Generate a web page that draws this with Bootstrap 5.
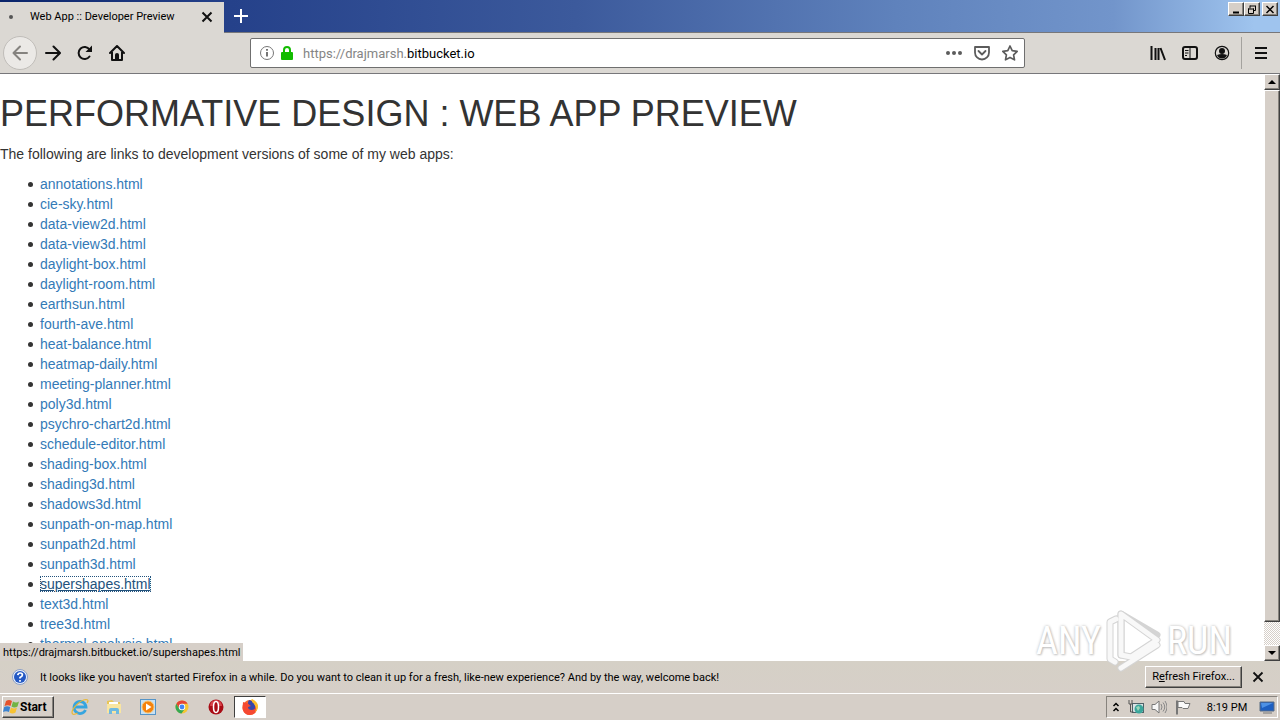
<!DOCTYPE html>
<html lang="en">
<head>
<meta charset="utf-8">
<meta name="viewport" content="width=device-width, initial-scale=1">
<title>Web App :: Developer Preview</title>
<link rel="stylesheet" href="https://cdn.jsdelivr.net/npm/bootstrap@5.3.0/dist/css/bootstrap.min.css">
<style>
:root { --face: #d6cfc8; --tool: #dbd8d3; }
body { font: 11px/16px Roboto, "Open Sans", sans-serif; color: #000; background: #fff; }
button { padding: 0; border: 0; background: none; color: #000; line-height: 14px; }
svg { display: block; flex: none; }
.tabstrip { height: 33px; background: linear-gradient(90deg, #0a246a 0, #25418a 18%, #3c5a9c 45%, #5f82bc 70%, #7295cb 87%, #9fc4ee 98%); border-bottom: 1px solid #77777a; }
.page-tab { width: 224px; height: 31px; margin-top: 2px; padding: 0 11px 2px 9px; background: var(--tool); }
.page-tab-fill { height: 33px; }
.busy { width: 4px; height: 4px; background: #555; border-radius: 50%; margin-right: 17px; }
.new-tab { width: 34px; }
.raised { background: var(--face); border: 1px solid; border-color: #fff #404040 #404040 #fff; box-shadow: inset -1px -1px #87837d; }
.win-btns { padding: 2px 2px 0; }
.win-btn { width: 16px; height: 14px; display: flex; align-items: center; justify-content: center; }
.win-close { margin-left: 2px; }
.toolbar { height: 41px; background: var(--tool); border-bottom: 1px solid #77777a; }
.tool-btn { width: 32px; height: 32px; display: flex; align-items: center; justify-content: center; }
.back { width: 34px; height: 34px; border: 1px solid #c0bdb9; border-radius: 50%; background: #ebe9e6; margin-left: 3px; }
.tool-end { padding-right: 3px; }
.tool-end .vr { margin: 0 3px; }
.urlbar { height: 30px; border: 1px solid #6f6f6f; border-radius: 2px; background: #fff; margin-left: 117px; flex: 0 1 775px; padding: 0 6px 0 8px; }
.address { font: 13px/20px Roboto, "Open Sans", sans-serif; color: #858585; outline: 0; padding-top: 1px; }
.address b { color: #000; font-weight: 400; }
.doc { font: 14px/20px "Liberation Sans", Arial, sans-serif; color: #333; overflow: hidden; padding-top: 20px; }
.doc h1 { font-size: 36px; line-height: 40px; font-weight: 400; margin: 0 0 10px; color: #333; }
.doc p { margin: 0 0 10px; }
.doc ul { padding-left: 28px; margin: 0; list-style: none; }
.doc li { display: flex; align-items: center; gap: 7px; height: 20px; }
.doc li::before { content: ""; width: 5px; height: 5px; border-radius: 50%; background: #333; }
.doc a { color: #337ab7; text-decoration: none; }
.doc a.current { color: #23527c; text-decoration: underline; line-height: 16px; outline: 1px dotted #23527c; outline-offset: -1px; }
.scroller { width: 16px; background: repeating-conic-gradient(#fff 0 25%, #d6cfc8 0 50%) 0 0 / 2px 2px; }
.scroller button { height: 16px; display: flex; align-items: center; justify-content: center; }
.thumb { flex: 0 1 532px; }
.status { left: 0; bottom: 0; height: 18px; padding: 2px 3px 0; background: var(--face); }
.watermark { right: 48px; bottom: -12px; height: 64px; font: 38px/64px "Roboto Condensed", "Liberation Sans Narrow", "Liberation Sans", sans-serif; color: #fff; text-shadow: 0 0 3px #b8b8b8, 1px 1px 2px #ccc; pointer-events: none; z-index: 2; }
.notice { height: 32px; background: linear-gradient(#d5d0c6, #d6cfc8); padding: 0 16px 0 12px; }
.refresh { width: 97px; height: 22px; margin-right: 10px; }
.taskbar { height: 27px; background: var(--face); border-top: 1px solid #fff; padding: 0 2px; }
.start { width: 52px; height: 22px; font-weight: 700; font-size: 12px; }
.tasks { gap: 2px; margin-left: 10px; }
.task { width: 32px; height: 22px; display: flex; align-items: center; justify-content: center; }
.task.pressed { background: #fff; border: 1px solid; border-color: #404040 #fff #fff #404040; }
.tray { width: 172px; height: 22px; border: 1px solid; border-color: #87837d #fff #fff #87837d; padding: 0 2px 0 5px; }
.ui-text { padding-top: 1px; }
</style>
</head>
<body class="vh-100 d-flex flex-column overflow-hidden">
<header>
  <div class="tabstrip d-flex">
    <div class="page-tab-fill"><div class="page-tab d-flex align-items-center">
      <span class="busy"></span><span class="ui-text flex-grow-1 text-nowrap">Web App :: Developer Preview</span>
      <button aria-label="Close tab"><svg width="12" height="12" viewBox="0 0 12 12"><path d="M1.500 1.500l9 9m0-9l-9 9" stroke="#111" stroke-width="2"/></svg></button>
    </div></div>
    <button class="new-tab d-flex align-items-center justify-content-center" aria-label="New tab"><svg width="14" height="14"><path d="M7 0v14M0 7h14" stroke="#fff" stroke-width="2"/></svg></button>
    <div class="win-btns ms-auto d-flex">
      <button class="win-btn raised" aria-label="Minimize"><svg width="10" height="9"><path d="M2 7.500h6" stroke="#000" stroke-width="2"/></svg></button>
      <button class="win-btn raised" aria-label="Restore"><svg width="10" height="9"><path d="M3 1h6M3 .5v3M8.500 1v4.500H7M1 4h6M1.500 3.500v5h5v-5" fill="none" stroke="#000"/></svg></button>
      <button class="win-btn win-close raised" aria-label="Close"><svg width="10" height="9"><path d="M1.500 1l7 7m0-7l-7 7" stroke="#000" stroke-width="1.500"/></svg></button>
    </div>
  </div>
  <nav class="toolbar d-flex align-items-center" aria-label="Navigation">
    <button class="tool-btn back" aria-label="Back"><svg width="16" height="16"><path d="M15 8H1.500M8 1.500L1.500 8 8 14.500" fill="none" stroke="#85837f" stroke-width="2" stroke-linecap="round" stroke-linejoin="round"/></svg></button>
    <button class="tool-btn" aria-label="Forward"><svg width="16" height="16"><path d="M1 8h13.500M8.500 1.500L15 8l-6.500 6.500" fill="none" stroke="#111" stroke-width="2" stroke-linecap="round" stroke-linejoin="round"/></svg></button>
    <button class="tool-btn" aria-label="Reload"><svg width="16" height="16"><path d="M12.500 11.500A6 6 0 1 1 12.500 4.500" fill="none" stroke="#111" stroke-width="2" stroke-linecap="round"/><path d="M15 .5V7H8.500z" fill="#111"/></svg></button>
    <button class="tool-btn" aria-label="Home"><svg width="16" height="16"><path d="M1 8l7-7 7 7M3 7v8h10V7" fill="none" stroke="#111" stroke-width="2" stroke-linecap="round" stroke-linejoin="round"/><path d="M6 15V9.500Q6 8 8 8t2 1.500V15z" fill="#111"/></svg></button>
    <div class="urlbar d-flex align-items-center">
      <svg width="16" height="16"><circle cx="8" cy="8" r="6.500" fill="none" stroke="#777"/><path d="M8 7v4.500M8 4v1.800" stroke="#666" stroke-width="1.800"/></svg>
      <svg class="ms-1" width="16" height="16"><path d="M5 8V5a3 3 0 0 1 6 0v3" fill="none" stroke="#12bc00" stroke-width="2"/><rect x="2" y="7" width="12" height="8" rx="1" fill="#12bc00"/></svg>
      <span class="address flex-grow-1 ms-2 text-nowrap" role="textbox" aria-label="Address" contenteditable="true" spellcheck="false">https://drajmarsh.<b>bitbucket.io</b></span>
      <div class="d-flex gap-2 align-items-center">
      <button class="px-1" aria-label="Page actions"><svg width="16" height="16" fill="#5c5c5c"><circle cx="2" cy="8" r="2"/><circle cx="8" cy="8" r="2"/><circle cx="14" cy="8" r="2"/></svg></button>
      <button aria-label="Save to Pocket"><svg width="16" height="16" fill="none" stroke="#5c5c5c" stroke-width="1.800" stroke-linejoin="round"><path d="M1 2h14v5.500a7 7 0 0 1-14 0z"/><path d="M4.500 6L8 9.500 11.500 6" stroke-linecap="round"/></svg></button>
      <button class="ms-1" aria-label="Bookmark"><svg width="16" height="16"><path d="M8 1l2.200 4.600 5 .7-3.600 3.500.9 5L8 12.400l-4.500 2.400.9-5L.8 6.300l5-.7z" fill="none" stroke="#5c5c5c" stroke-width="1.700" stroke-linejoin="round"/></svg></button>
      </div>
    </div>
    <div class="tool-end ms-auto d-flex align-items-center">
      <button class="tool-btn" aria-label="Library"><svg width="16" height="16"><path d="M1.500 1v14M5.500 3v12M8.500 3v12M10.500 3l4.500 12" fill="none" stroke="#111" stroke-width="2"/></svg></button>
      <button class="tool-btn" aria-label="Sidebars"><svg width="16" height="16"><rect x="1" y="2" width="14" height="12" rx="2" fill="none" stroke="#111" stroke-width="2"/><path d="M8 2v12M3 5.500h3.500M3 8h3.500M3 10.500h2" stroke="#111"/></svg></button>
      <button class="tool-btn" aria-label="Account"><svg width="16" height="16"><circle cx="8" cy="8" r="6.700" fill="none" stroke="#111" stroke-width="1.200"/><circle cx="8" cy="6" r="3" fill="#111"/><path d="M3 10q5-2 10 0-1.500 3.500-5 3.500T3 10z" fill="#111"/></svg></button>
      <div class="vr"></div>
      <button class="tool-btn" aria-label="Menu"><svg width="14" height="14"><path d="M1 2h12M1 7h12M1 12h12" stroke="#111" stroke-width="2"/></svg></button>
    </div>
  </nav>
</header>
<div class="d-flex flex-grow-1 position-relative" style="min-height:0">
  <main class="doc flex-grow-1">
    <h1>PERFORMATIVE DESIGN : WEB APP PREVIEW</h1>
    <p>The following are links to development versions of some of my web apps:</p>
    <ul>
      <li><a href="#">annotations.html</a></li>
      <li><a href="#">cie-sky.html</a></li>
      <li><a href="#">data-view2d.html</a></li>
      <li><a href="#">data-view3d.html</a></li>
      <li><a href="#">daylight-box.html</a></li>
      <li><a href="#">daylight-room.html</a></li>
      <li><a href="#">earthsun.html</a></li>
      <li><a href="#">fourth-ave.html</a></li>
      <li><a href="#">heat-balance.html</a></li>
      <li><a href="#">heatmap-daily.html</a></li>
      <li><a href="#">meeting-planner.html</a></li>
      <li><a href="#">poly3d.html</a></li>
      <li><a href="#">psychro-chart2d.html</a></li>
      <li><a href="#">schedule-editor.html</a></li>
      <li><a href="#">shading-box.html</a></li>
      <li><a href="#">shading3d.html</a></li>
      <li><a href="#">shadows3d.html</a></li>
      <li><a href="#">sunpath-on-map.html</a></li>
      <li><a href="#">sunpath2d.html</a></li>
      <li><a href="#">sunpath3d.html</a></li>
      <li><a href="#" class="current">supershapes.html</a></li>
      <li><a href="#">text3d.html</a></li>
      <li><a href="#">tree3d.html</a></li>
      <li><a href="#">thermal-analysis.html</a></li>
    </ul>
  </main>
  <div class="scroller d-flex flex-column">
    <button class="raised" aria-label="Scroll up"><svg width="8" height="4"><path d="M0 4l4-4 4 4z"/></svg></button>
    <div class="thumb raised"></div>
    <button class="raised mt-auto" aria-label="Scroll down"><svg width="8" height="4"><path d="M0 0l4 4 4-4z"/></svg></button>
  </div>
  <div class="status position-absolute text-nowrap">https://drajmarsh.bitbucket.io/supershapes.html</div>
  <div class="watermark position-absolute d-flex align-items-center gap-1">
    <span>ANY</span>
    <svg width="58" height="64" viewBox="0 0 58 64" fill="none" stroke-linejoin="round" stroke-linecap="round"><g stroke="#d4d4d4" stroke-width="7"><path d="M11 10L5 13V50l5 3M16 46V5l36 21M16 59l36-23"/><path d="M16 46V5l36 26-26 17z"/></g><g stroke="#f8f8f8" stroke-width="5"><path d="M11 10L5 13V50l5 3M16 59l36-23"/><path d="M16 46V5l36 26-26 17z"/></g></svg>
    <span>RUN</span>
  </div>
</div>
<footer>
  <div class="notice d-flex align-items-center">
    <svg width="16" height="16"><circle cx="8" cy="8" r="7.500" fill="#e8eefb" stroke="#8b9fc5"/><circle cx="8" cy="8" r="6" fill="#2358c4"/><path d="M5.800 6.200Q6 4 8.200 4t2.200 2Q10.400 7.300 8 8.500v1M8 11v1.800" fill="none" stroke="#fff" stroke-width="1.700"/></svg>
    <span class="ui-text flex-grow-1 text-nowrap ms-2 ps-1">It looks like you haven't started Firefox in a while. Do you want to clean it up for a fresh, like-new experience? And by the way, welcome back!</span>
    <button class="refresh raised text-nowrap">R<u>e</u>fresh Firefox...</button>
    <button aria-label="Dismiss"><svg width="12" height="12"><path d="M1.500 1.500l9 9m0-9l-9 9" stroke="#111" stroke-width="1.800"/></svg></button>
  </div>
  <div class="taskbar d-flex align-items-center">
    <button class="start raised d-flex align-items-center"><svg width="17" height="16" viewBox="0 0 17 16"><path d="M3 2q3-2 6 0L7.500 7Q5 5.500 1.500 7z" fill="#e5532d"/><path d="M10 2.500q3 2 6 0L14.500 7.500q-3 2-6 0z" fill="#72b443"/><path d="M1.200 8Q4 6.500 7.200 8L6 13Q3 11.500 0 13z" fill="#3c83d0"/><path d="M8 8.500q3 2 6 0L12.500 13.500q-3 2-6 0z" fill="#f7c232"/></svg>Start</button>
    <div class="tasks d-flex">
      <button class="task" aria-label="Internet Explorer"><svg width="18" height="18"><path d="M14.500 12A6 6 0 1 1 15 9H4" fill="none" stroke="#36a5df" stroke-width="2.800"/><path d="M1.500 16C-1 12 9 2 15 1.500c3 0 2 2 1 3.500M1.500 16q2 1 5-1" fill="none" stroke="#e9b834" stroke-width="1.200"/></svg></button>
      <button class="task" aria-label="Explorer"><svg width="18" height="18"><path d="M2 3l5-1 2 2h6v11H2z" fill="#e8c657"/><path d="M2 6h14v9H2z" fill="#f9e5a0"/><path d="M4 4h9v2H4z" fill="#fff"/><path d="M4 16v-4q0-2 2-2h6q2 0 2 2v4h-3v-3H7v3z" fill="#70b9df"/></svg></button>
      <button class="task" aria-label="Media Player"><svg width="18" height="18"><rect x="1.500" y="1.500" width="15" height="15" fill="#c8e1f3" stroke="#5594c7"/><circle cx="9" cy="9" r="6" fill="#f4820d" stroke="#fbc26a"/><path d="M7 5.500v7L12.500 9z" fill="#fff"/></svg></button>
      <button class="task" aria-label="Chrome"><svg width="16" height="16" viewBox="0 0 16 16"><circle cx="8" cy="8" r="6.500" fill="#f5c633"/><path d="M2.400 4.700A6.500 6.500 0 0 1 13.600 4.700H8L5.200 9.600z" fill="#e54335"/><path d="M2.400 4.700A6.500 6.500 0 0 0 7.500 14.500L11 9.500H5z" fill="#35a853"/><circle cx="8" cy="8" r="3.200" fill="#fff"/><circle cx="8" cy="8" r="2.400" fill="#4285f4"/></svg></button>
      <button class="task" aria-label="Opera"><svg width="16" height="16"><circle cx="8" cy="8" r="7.500" fill="#a90c15"/><path d="M2 7a6 6 0 0 1 12 0z" fill="#d9434a"/><ellipse cx="8" cy="8" rx="2.500" ry="5.500" fill="#a90c15" stroke="#fff" stroke-width="1.500"/></svg></button>
      <button class="task pressed" aria-label="Firefox"><svg width="18" height="18"><circle cx="9" cy="9.500" r="7.500" fill="#f6662c"/><path d="M10 1q6 3 6.500 9-2-3-5-3z" fill="#ffd23d"/><path d="M8 2q5 1 6 6t-4 6q-5 0-6-4l4-2q-2-3 0-6z" fill="#3946a9"/><path d="M2 4q2 1 4 1l4 3-3 1q0 3 4 3 4-1 4-4 2 8-6 9-6 0-7.500-6z" fill="#f54831"/><path d="M11 4q6 4 3 10 3-2 3-6t-6-7z" fill="#ffbd2b"/></svg></button>
    </div>
    <div class="tray d-flex align-items-center justify-content-between ms-auto">
      <button aria-label="Show hidden icons"><svg width="8" height="12"><path d="M1.500 5L4 2.500 6.500 5M1.500 10L4 7.500 6.500 10" fill="none" stroke="#000" stroke-width="1.500"/></svg></button>
      <svg width="16" height="16"><rect x="4.500" y="4.500" width="11" height="9" fill="#d8e3e5" stroke="#4f6268"/><circle cx="11" cy="10" r="4.500" fill="#3ba69b"/><path d="M8 8l3-1 1 2-2 3z" fill="#9bd7ba"/><path d="M1 1v4h3V1M2.500 5v8h3" fill="none" stroke="#555"/></svg>
      <svg width="16" height="16"><path d="M1 5.500h3L8 2v12l-4-3.500H1z" fill="#f6f6f6" stroke="#777"/><path d="M10 5q2 3 0 6M12 3.500q3.500 4.500 0 9M14 2q4 6 0 12" fill="none" stroke="#888"/></svg>
      <svg width="16" height="16"><path d="M2 1.500v14" stroke="#777" stroke-width="2"/><path d="M3 2.500h6l1 2h5l-2 5H8l-1-1H3z" fill="#fafafa" stroke="#777"/></svg>
      <time class="ui-text mx-1 ps-1 text-nowrap">8:19 PM</time>
      <button aria-label="Show desktop"><svg width="16" height="16"><path d="M1 3h14v9H1z" fill="#1d5fc1" stroke="#5b6c83"/><path d="M2 4h12L3 9z" fill="#4d91e5"/><path d="M4 14h9" stroke="#777"/></svg></button>
    </div>
  </div>
</footer>
<script src="https://cdn.jsdelivr.net/npm/bootstrap@5.3.0/dist/js/bootstrap.bundle.min.js"></script>
</body>
</html>
